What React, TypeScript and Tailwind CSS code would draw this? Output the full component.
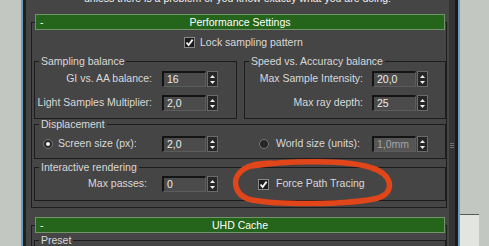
import React from "react";

function Arrows() {
  return (
    <div className="ml-[1px] flex h-[16px] w-[11px] flex-col items-center justify-center gap-[3px] border border-[#6a6a6a] bg-[#262626]">
      <svg width="5" height="3" viewBox="0 0 5 3">
        <path d="M0 3 L2.5 0 L5 3 Z" fill="#f0f0f0" />
      </svg>
      <svg width="5" height="3" viewBox="0 0 5 3">
        <path d="M0 0 L5 0 L2.5 3 Z" fill="#f0f0f0" />
      </svg>
    </div>
  );
}

function Spinner({ value, disabled }: { value: string; disabled?: boolean }) {
  return (
    <div className="flex h-[16px] items-stretch">
      <div
        className={`h-[16px] w-[44px] border-t-2 border-l-2 border-r border-b border-[#141414] border-r-[#5c5c5c] border-b-[#5c5c5c] pl-[3px] leading-[13px] ${
          disabled ? "bg-[#555555] text-[#a4a4a4]" : "bg-[#4b4b4b] text-[#ececec]"
        }`}
      >
        {value}
      </div>
      <Arrows />
    </div>
  );
}

function Checkbox() {
  return (
    <div className="flex h-[11px] w-[11px] shrink-0 items-center justify-center border border-[#8a8a8a] bg-[#1c1c1c]">
      <svg width="9" height="9" viewBox="0 0 9 9">
        <polyline points="1.5,4.5 3.6,7 7.6,1.6" fill="none" stroke="#f4f4f4" strokeWidth="1.8" />
      </svg>
    </div>
  );
}

function Radio({ on }: { on?: boolean }) {
  return (
    <div className="flex h-[10px] w-[10px] shrink-0 items-center justify-center rounded-full border border-[#7a7a7a] bg-[#262626]">
      {on && <div className="h-[4px] w-[4px] rounded-full bg-[#f0f0f0]" />}
    </div>
  );
}

function TitleBar({ title }: { title: string }) {
  return (
    <div className="-mt-[9px] ml-[3px] flex h-[16px] w-[410px] items-center border border-[#6f9466] bg-[#24651b] leading-[14px] text-white">
      <span className="w-[22px] pl-[4px]">-</span>
      <span className="flex-1 pr-[22px] text-center">{title}</span>
    </div>
  );
}

function Row({ label, w, gap, value }: { label: string; w: string; gap: string; value: string }) {
  return (
    <div className="flex h-[16px] items-center">
      <span className={`${w} ${gap} text-right whitespace-nowrap`}>{label}</span>
      <Spinner value={value} />
    </div>
  );
}

export default function App() {
  return (
    <div className="relative flex h-[246px] w-[489px] overflow-hidden bg-[#c2c8c1] font-['Liberation_Sans',Arial,sans-serif] text-[10.5px] text-[#d9d9d9]">
      <div className="w-[21px] shrink-0" />
      <div className="w-[2px] shrink-0 bg-[#6e9fc2]" />
      <div className="w-[3px] shrink-0 bg-[#1f1f1f]" />

      {/* main panel */}
      <div className="flex w-[423px] shrink-0 flex-col overflow-hidden bg-[#454545]">
        <div className="-mt-[8px] h-[13px] shrink-0 whitespace-nowrap text-center leading-[13px] text-[#f2f2f2]">
          unless there is a problem or you know exactly what you are doing!
        </div>

        <div className="mt-[17px] ml-[5px] w-[416px] shrink-0 border border-[#1e1e1e] pb-[6px]">
          <TitleBar title="Performance Settings" />

          <div className="flex h-[25px] items-center pl-[152px]">
            <Checkbox />
            <span className="ml-[5px]">Lock sampling pattern</span>
          </div>

          <div className="flex gap-[7px] pl-[2px]">
            <fieldset className="w-[203px] border border-[#1c1c1c] pt-[4px] pb-[7px]">
              <legend className="ml-[4px] px-[2px] leading-[12px]">Sampling balance</legend>
              <Row label="GI vs. AA balance:" w="w-[117px]" gap="mr-[10px]" value="16" />
              <div className="mt-[8px]">
                <Row label="Light Samples Multiplier:" w="w-[117px]" gap="mr-[10px]" value="2,0" />
              </div>
            </fieldset>
            <fieldset className="w-[202px] border border-[#1c1c1c] pt-[4px] pb-[7px]">
              <legend className="ml-[4px] px-[2px] leading-[12px]">Speed vs. Accuracy balance</legend>
              <Row label="Max Sample Intensity:" w="w-[118px]" gap="mr-[9px]" value="20,0" />
              <div className="mt-[8px]">
                <Row label="Max ray depth:" w="w-[118px]" gap="mr-[9px]" value="25" />
              </div>
            </fieldset>
          </div>

          <fieldset className="-mt-[1px] ml-[2px] w-[412px] border border-[#1c1c1c] pt-[6px] pb-[6px]">
            <legend className="ml-[4px] px-[2px] leading-[12px]">Displacement</legend>
            <div className="flex h-[16px] items-center">
              <div className="flex w-[127px] items-center pl-[8px]">
                <Radio on />
                <span className="ml-[5px] whitespace-nowrap">Screen size (px):</span>
              </div>
              <Spinner value="2,0" />
              <div className="ml-[27px] flex w-[127px] items-center pl-[14px]">
                <Radio />
                <span className="ml-[7px] whitespace-nowrap">World size (units):</span>
              </div>
              <Spinner value="1,0mm" disabled />
            </div>
          </fieldset>

          <fieldset className="mt-[2px] ml-[2px] w-[412px] border border-[#1c1c1c] pt-[3px] pb-[8px]">
            <legend className="ml-[4px] px-[2px] leading-[12px]">Interactive rendering</legend>
            <div className="flex h-[16px] items-center">
              <span className="w-[127px] pr-[15px] text-right">Max passes:</span>
              <Spinner value="0" />
              <div className="ml-[27px] flex w-[127px] items-center pl-[13px]">
                <Checkbox />
                <span className="ml-[7px] whitespace-nowrap">Force Path Tracing</span>
              </div>
            </div>
          </fieldset>
        </div>

        <div className="mt-[17px] ml-[5px] w-[416px] shrink-0 border border-[#1e1e1e]">
          <TitleBar title="UHD Cache" />
          <fieldset className="mt-[1px] ml-[2px] h-[40px] w-[412px] border border-[#1c1c1c]">
            <legend className="ml-[4px] px-[2px] leading-[12px]">Preset</legend>
          </fieldset>
        </div>
      </div>

      {/* right edge of the window */}
      <div className="flex w-[6px] shrink-0 flex-col bg-[#333333] pl-[1px]">
        <div className="mt-[143px] flex flex-col gap-[1px]">
          <div className="h-[1px] w-[4px] bg-[#707070]" />
          <div className="h-[1px] w-[4px] bg-[#707070]" />
          <div className="h-[1px] w-[4px] bg-[#707070]" />
        </div>
      </div>
      <div className="w-[3px] shrink-0 bg-[#1b1b1b]" />
      <div className="w-[2px] shrink-0 bg-[#6e9fc2]" />
      <div className="flex flex-col">
        <div className="mt-[214px] h-[1px] w-[19px] bg-[#5a5a5a]" />
        <div className="w-[19px] flex-1 bg-[#e3e5e1]" />
      </div>

      {/* hand-drawn highlight */}
      <svg className="pointer-events-none absolute top-0 left-0" width="489" height="246" viewBox="0 0 489 246">
        <path
          d="M252 166 C290 160, 350 160, 372 168 C392 174, 396 192, 378 198 C350 205, 280 205, 252 200 C234 196, 230 178, 244 169 C250 165, 262 163, 272 163"
          fill="none"
          stroke="#e0461a"
          strokeWidth="5.5"
          strokeLinecap="round"
        />
      </svg>
    </div>
  );
}
